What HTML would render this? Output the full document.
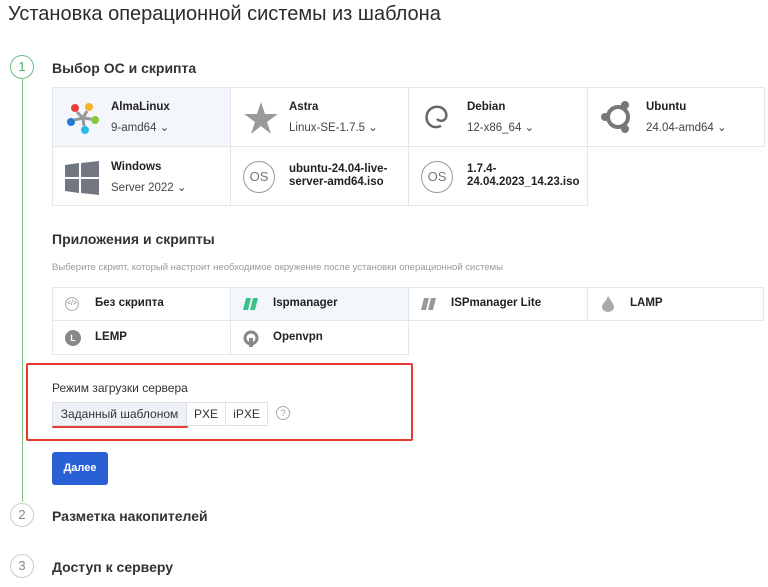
<!DOCTYPE html>
<html><head><meta charset="utf-8"><style>
*{box-sizing:border-box;margin:0;padding:0}
body{width:768px;height:587px;overflow:hidden;background:#fff;font-family:"Liberation Sans","DejaVu Sans",sans-serif;color:#222;position:relative}
.a{position:absolute}
h1{position:absolute;left:8px;top:3px;font-size:20px;font-weight:normal;color:#2b2b2b;white-space:nowrap}
.circ{position:absolute;width:24px;height:24px;border-radius:50%;border:1.5px solid #ccc;text-align:center;line-height:21px;font-size:13px;color:#888;left:10px}
.step{position:absolute;left:52px;font-size:14px;font-weight:bold;color:#333}
.cell{position:absolute;border:1px solid #e3e6ea;background:#fff}
.cell b{position:absolute;font-size:11.5px;color:#222}
.cell span{position:absolute;font-size:11.5px;color:#444}
.sc b{font-size:11.5px}
</style></head><body>
<h1>Установка операционной системы из шаблона</h1>
<div class="a" style="left:22px;top:79px;width:1px;height:423px;background:#7cc08a"></div>
<div class="circ" style="top:55px;border-color:#6cbf7e;color:#4caf62">1</div>
<div class="step" style="top:60px">Выбор ОС и скрипта</div>

<div class="cell" style="left:52px;top:87px;width:179px;height:60px;background:#f3f6fb">
<svg class="a" style="left:12px;top:12px" width="36" height="36" viewBox="0 0 36 36"><circle cx="10" cy="8" r="4" fill="#e8413b"/><circle cx="24" cy="7" r="4" fill="#f7b22b"/><circle cx="30" cy="20" r="4" fill="#8dc63f"/><circle cx="20" cy="30" r="4" fill="#2bbbe7"/><circle cx="6" cy="22" r="4" fill="#1e7bd3"/><path d="M12 12l6 6M22 11l-4 7M26 19l-8-1M19 26l-1-8M9 20l9-2" stroke="#999" stroke-width="3"/></svg>
<b style="left:58px;top:13px">AlmaLinux</b><span style="left:58px;top:32px">9-amd64 ⌄</span></div>
<div class="cell" style="left:230px;top:87px;width:179px;height:60px">
<svg class="a" style="left:12px;top:12px" width="36" height="36" viewBox="0 0 36 36"><polygon points="18,2 22,14 35,14 24,22 28,34 18,26 8,34 12,22 1,14 14,14" fill="#9a9a9a"/></svg>
<b style="left:58px;top:13px">Astra</b><span style="left:58px;top:32px">Linux-SE-1.7.5 ⌄</span></div>
<div class="cell" style="left:408px;top:87px;width:180px;height:60px">
<svg class="a" style="left:12px;top:12px" width="30" height="36" viewBox="0 0 30 36"><path d="M20 26C10 30 4 22 6 14C9 5 22 4 25 13C27 20 20 23 16 19" fill="none" stroke="#666" stroke-width="2.5"/></svg>
<b style="left:58px;top:13px">Debian</b><span style="left:58px;top:32px">12-x86_64 ⌄</span></div>
<div class="cell" style="left:587px;top:87px;width:178px;height:60px">
<svg class="a" style="left:12px;top:12px" width="34" height="34" viewBox="0 0 34 34"><circle cx="18" cy="17" r="10" fill="none" stroke="#777" stroke-width="4"/><circle cx="5" cy="17" r="4" fill="#777"/><circle cx="25" cy="5" r="4" fill="#777"/><circle cx="25" cy="29" r="4" fill="#777"/></svg>
<b style="left:58px;top:13px">Ubuntu</b><span style="left:58px;top:32px">24.04-amd64 ⌄</span></div>
<div class="cell" style="left:52px;top:146px;width:179px;height:60px">
<svg class="a" style="left:12px;top:14px" width="34" height="34" viewBox="0 0 34 34"><path d="M0 4l14-2v14H0zM16 2l18-2v16H16zM0 18h14v14L0 30zM16 18h18v16l-18-2z" fill="#707780"/></svg>
<b style="left:58px;top:14px">Windows</b><span style="left:58px;top:33px">Server 2022 ⌄</span></div>
<div class="cell" style="left:230px;top:146px;width:179px;height:60px">
<div class="a" style="left:12px;top:14px;width:32px;height:32px;border:1.5px solid #999;border-radius:50%;text-align:center;line-height:29px;font-size:13px;color:#777">OS</div>
<b style="left:58px;top:16px;line-height:13px">ubuntu-24.04-live-<br>server-amd64.iso</b></div>
<div class="cell" style="left:408px;top:146px;width:180px;height:60px">
<div class="a" style="left:12px;top:14px;width:32px;height:32px;border:1.5px solid #999;border-radius:50%;text-align:center;line-height:29px;font-size:13px;color:#777">OS</div>
<b style="left:58px;top:16px;line-height:13px">1.7.4-<br>24.04.2023_14.23.iso</b></div>

<div class="a" style="left:52px;top:231px;font-size:14px;font-weight:bold;color:#333">Приложения и скрипты</div>
<div class="a" style="left:52px;top:262px;font-size:9.5px;color:#999;white-space:nowrap">Выберите скрипт, который настроит необходимое окружение после установки операционной системы</div>

<div class="cell sc" style="left:52px;top:287px;width:179px;height:34px"><div class="a" style="left:12px;top:9px;width:14px;height:14px;border:1px solid #aaa;border-radius:50%;font-size:7px;color:#888;text-align:center;line-height:12px">&lt;/&gt;</div><b style="left:42px;top:9px">Без скрипта</b></div>
<div class="cell sc" style="left:230px;top:287px;width:179px;height:34px;background:#f3f6fb"><svg class="a" style="left:12px;top:10px" width="16" height="12"><path d="M3 0h5l-3 12H0zM10 0h5l-3 12H7z" fill="#3fc08a"/></svg><b style="left:42px;top:9px">Ispmanager</b></div>
<div class="cell sc" style="left:408px;top:287px;width:180px;height:34px"><svg class="a" style="left:12px;top:10px" width="16" height="12"><path d="M3 0h5l-3 12H0zM10 0h5l-3 12H7z" fill="#999"/></svg><b style="left:42px;top:9px">ISPmanager Lite</b></div>
<div class="cell sc" style="left:587px;top:287px;width:177px;height:34px"><svg class="a" style="left:14px;top:8px" width="12" height="16"><path d="M6 0C9 5 12 8 12 11a6 5 0 0 1-12 0C0 7 4 6 6 0z" fill="#aaa"/></svg><b style="left:42px;top:9px">LAMP</b></div>
<div class="cell sc" style="left:52px;top:320px;width:179px;height:35px"><div class="a" style="left:12px;top:9px;width:16px;height:16px;background:#888;border-radius:50%;color:#fff;font-size:9px;font-weight:bold;text-align:center;line-height:16px">L</div><b style="left:42px;top:10px">LEMP</b></div>
<div class="cell sc" style="left:230px;top:320px;width:179px;height:35px"><svg class="a" style="left:12px;top:9px" width="16" height="17"><circle cx="8" cy="8" r="6" fill="none" stroke="#888" stroke-width="3"/><rect x="6" y="8" width="4" height="9" fill="#888"/></svg><b style="left:42px;top:10px">Openvpn</b></div>

<div class="a" style="left:26px;top:363px;width:387px;height:78px;border:2.5px solid #e53a2f;border-radius:2px"></div>
<div class="a" style="left:52px;top:381px;font-size:12px;color:#333">Режим загрузки сервера</div>
<div class="a" style="left:52px;top:402px;width:135px;height:24px;border:1px solid #dde1e6;background:#eef2f8;font-size:12px;text-align:center;line-height:22px;color:#333">Заданный шаблоном</div>
<div class="a" style="left:186px;top:402px;width:40px;height:24px;border:1px solid #dde1e6;font-size:12px;text-align:center;line-height:22px;color:#333">PXE</div>
<div class="a" style="left:225px;top:402px;width:43px;height:24px;border:1px solid #dde1e6;font-size:12px;text-align:center;line-height:22px;color:#333">iPXE</div>
<div class="a" style="left:276px;top:406px;width:14px;height:14px;border:1px solid #aaa;border-radius:50%;font-size:9px;color:#999;text-align:center;line-height:12px">?</div>
<div class="a" style="left:52px;top:426px;width:136px;height:2px;background:#e53a2f;border-radius:1px"></div>

<div class="a" style="left:52px;top:452px;width:56px;height:33px;background:#2a60d6;border-radius:3px;color:#fff;font-size:11px;font-weight:bold;text-align:center;line-height:33px">Далее</div>

<div class="circ" style="top:503px">2</div>
<div class="step" style="top:508px">Разметка накопителей</div>
<div class="circ" style="top:554px">3</div>
<div class="step" style="top:559px">Доступ к серверу</div>
</body></html>
